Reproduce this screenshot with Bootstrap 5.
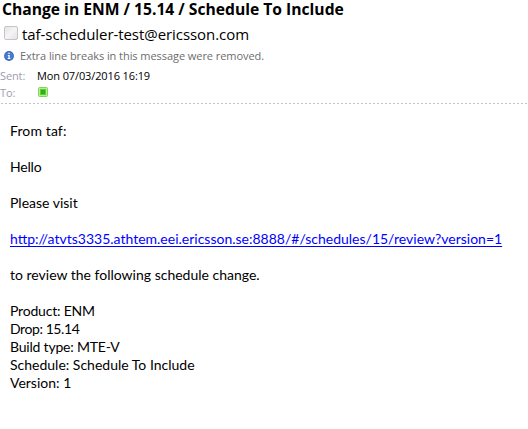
<!DOCTYPE html>
<html lang="en">
<head>
<meta charset="utf-8">
<meta name="viewport" content="width=device-width, initial-scale=1">
<title>Change in ENM / 15.14 / Schedule To Include</title>
<link href="https://cdn.jsdelivr.net/npm/bootstrap@5.3.0/dist/css/bootstrap.min.css" rel="stylesheet">
<style>
body{background:#fff;color:#000;font-family:"Open Sans","Noto Sans",sans-serif;overflow:hidden}
.subject{font-size:15.65px;font-weight:700;line-height:18px;height:20px;padding-left:2px}
.sender{height:28px;padding-left:4px;font-size:15px;letter-spacing:-.06px}
.sender svg{margin-top:-2px}
.notice{height:16px;padding-left:4px;font-size:11px;letter-spacing:-.06px;color:#6d6d6d}
.notice svg{margin-right:6px}
.meta-row{height:17px;font-size:11px;line-height:16px;letter-spacing:-.12px}
.meta-row svg{margin-top:2px}
.meta-label{width:37px;color:#a19bb0}
.rule{height:1px;margin-top:1px;background:repeating-linear-gradient(90deg,#fff 0 1px,#c3c3c3 1px 3px,#fff 3px 4px)}
.mail-body{font-family:Lato,"Open Sans",sans-serif;font-size:14px;line-height:18px;padding:18px 0 0 10px}
.mail-body p{margin-bottom:18px}
.mail-body a{color:#00f;text-underline-offset:2px;text-decoration-thickness:1px;text-decoration-skip-ink:none}
.wide{letter-spacing:.12px}
.tight{letter-spacing:-.2px}
.tighter{letter-spacing:-.42px}
</style>
</head>
<body>
<header>
<h1 class="subject mb-0 text-nowrap">Change in ENM / 15.14 / Schedule To Include</h1>
<div class="sender d-flex align-items-center text-nowrap">
<svg class="me-1 flex-shrink-0" width="14" height="14" viewBox="0 0 14 14"><defs><linearGradient id="g" x1="0" y1="0" x2="1" y2="1"><stop offset="0" stop-color="#e4e2e4"/><stop offset=".5" stop-color="#f6f4f6"/><stop offset="1" stop-color="#e2e0e2"/></linearGradient></defs><rect x=".5" y=".5" width="13" height="13" rx="1.5" fill="url(#g)" stroke="#c6c4c6"/></svg>
<span>taf-scheduler-test@ericsson.com</span></div>
<div class="notice d-flex align-items-center text-nowrap">
<svg class="flex-shrink-0" width="10" height="10" viewBox="0 0 10 10"><circle cx="5" cy="5" r="4.9" fill="#3563bd"/><circle cx="5" cy="5" r="4" fill="#4a7ad0"/><path d="M4.4 1.8h1.3v1.3H4.4zM3.9 4h1.8v3h.7v1H3.8V7h.6V5h-.5z" fill="#fff"/></svg>
<span>Extra line breaks in this message were removed.</span></div>
<div class="meta-row d-flex mt-1"><span class="meta-label">Sent:</span><span>Mon 07/03/2016 16:19</span></div>
<div class="meta-row d-flex"><span class="meta-label">To:</span>
<svg width="12" height="12" viewBox="0 0 12 12"><rect x="1.5" y=".5" width="9" height="9" rx="1" fill="#b5f08a" stroke="#7fd45a"/><rect x="3.5" y="2.5" width="5" height="5" fill="#2fae1c" stroke="#5ecb3a"/></svg></div>
<div class="rule"></div>
</header>
<main class="mail-body text-nowrap">
<p class="wide">From taf:</p>
<p class="tight">Hello</p>
<p>Please visit</p>
<p><a href="#">http://atvts3335.athtem.eei.ericsson.se:8888/#/schedules/15/review?version=1</a></p>
<p>to review the following schedule change.</p>
<div class="tight">Product: ENM</div>
<div class="tighter">Drop: 15.14</div>
<div class="tight">Build type: MTE-V</div>
<div>Schedule: Schedule To Include</div>
<div>Version: 1</div>
</main>
<script src="https://cdn.jsdelivr.net/npm/bootstrap@5.3.0/dist/js/bootstrap.bundle.min.js"></script>
</body>
</html>
